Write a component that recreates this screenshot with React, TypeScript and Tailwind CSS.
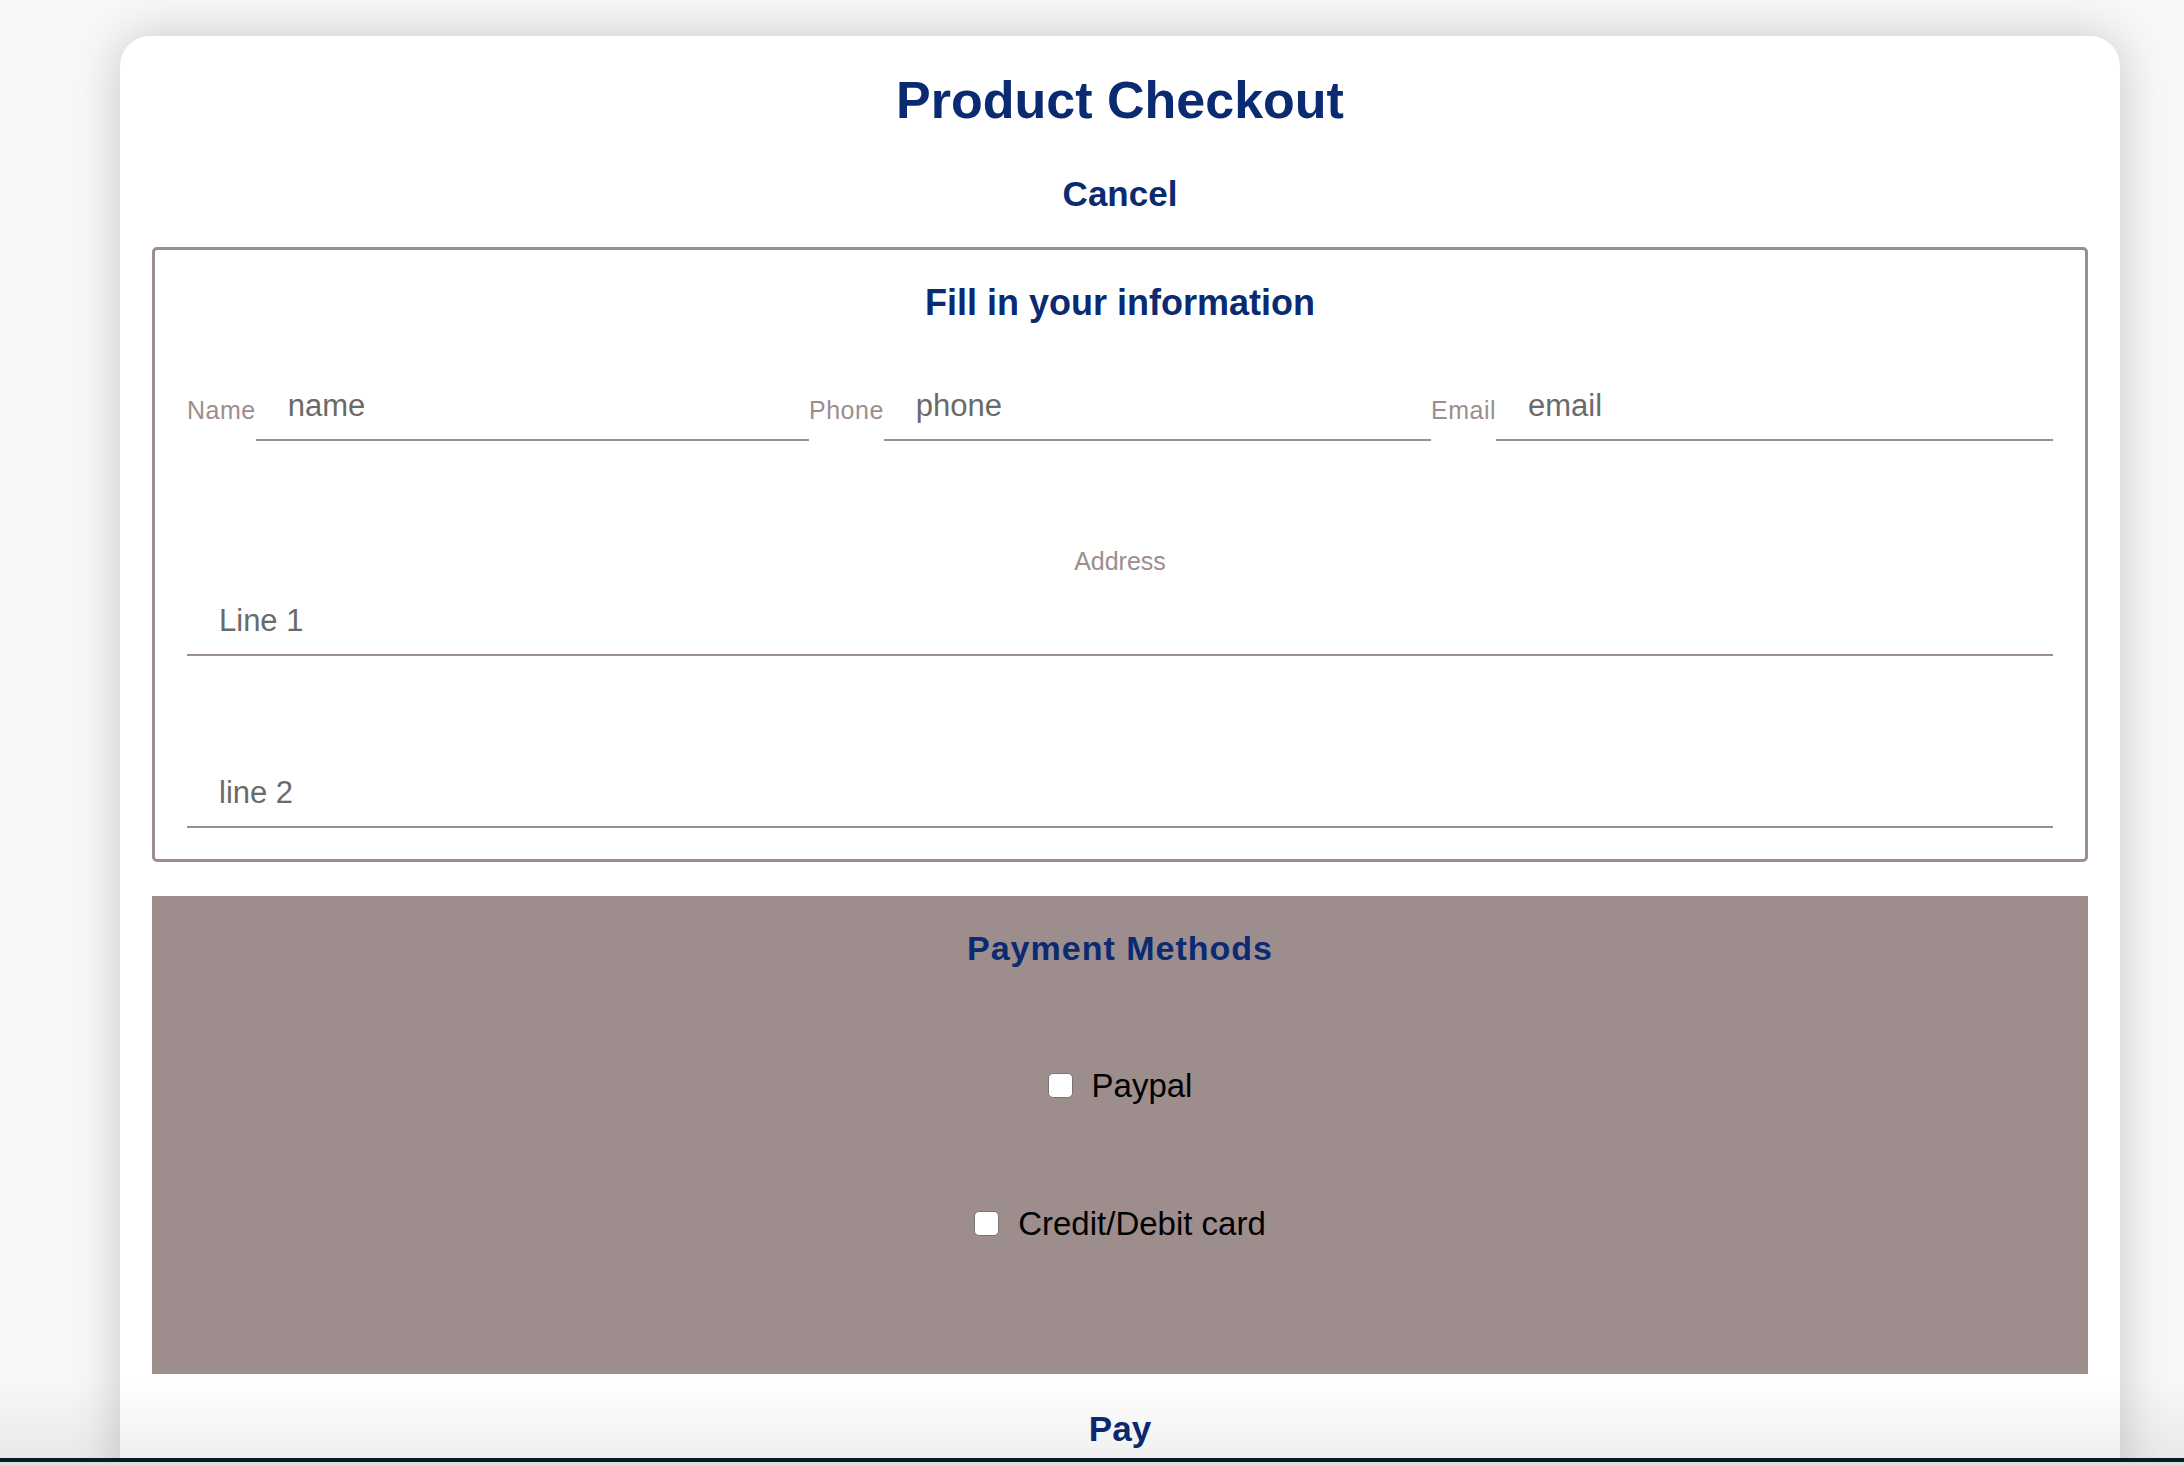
import React, { useState } from 'react';

const font = { fontFamily: '"Liberation Sans", Arial, sans-serif' };

interface FieldProps {
  label?: string;
  placeholder: string;
}

const InlineField: React.FC<FieldProps> = ({ label, placeholder }) => (
  <div className="flex flex-1 items-end">
    <label className="pb-[16px] text-[25px] leading-[29px] tracking-[0.5px] text-[#9d8d8d] whitespace-nowrap">
      {label}
    </label>
    <input
      type="text"
      placeholder={placeholder}
      className="min-w-0 flex-1 border-b-2 border-[#9d8d8d] bg-transparent py-[15px] pl-8 text-[31px] leading-[36px] text-[#6a6a6a] outline-none placeholder:text-[#6a6a6a]"
    />
  </div>
);

const PaymentOption: React.FC<{ label: string; checked: boolean; onToggle: () => void }> = ({
  label,
  checked,
  onToggle,
}) => (
  <label className="flex items-center gap-[19px] cursor-pointer">
    <input
      type="checkbox"
      checked={checked}
      onChange={onToggle}
      className="h-[25px] w-[25px] appearance-none rounded-[5px] border border-[#767676] bg-white checked:bg-[#0a2a72]"
    />
    <span className="text-[33px] leading-[37px] text-black">{label}</span>
  </label>
);

export default function App() {
  const [paypal, setPaypal] = useState(false);
  const [card, setCard] = useState(false);

  return (
    <div className="flex h-[1466px] w-[2184px] flex-col overflow-hidden bg-[#f8f8f8]" style={font}>
      <div className="relative h-[1458px] overflow-hidden pt-9">
        <div className="ml-[120px] w-[2000px] rounded-t-[30px] bg-white px-8 pt-[34px] pb-10 shadow-[0_0_50px_rgba(0,0,0,0.2)]">
          <h1 className="text-center text-[52px] leading-[60px] font-bold text-[#0a2a72]">Product Checkout</h1>
          <div className="mt-[44px] text-center">
            <button className="text-[35px] leading-[40px] font-bold text-[#0a2a72]">Cancel</button>
          </div>

          {/* customer info */}
          <div className="mt-[33px] rounded-[5px] border-[3px] border-[#9d8d8d] px-8 pt-8 pb-[31px]">
            <h3 className="text-center text-[36px] leading-[41px] font-bold text-[#0a2a72]">Fill in your information</h3>
            <div className="mt-[50px] flex">
              <InlineField label="Name" placeholder="name" />
              <InlineField label="Phone" placeholder="phone" />
              <InlineField label="Email" placeholder="email" />
            </div>
            <p className="mt-[106px] text-center text-[25px] leading-[29px] text-[#9d8d8d]">Address</p>
            <input
              type="text"
              placeholder="Line 1"
              className="mt-[12px] block w-full border-b-2 border-[#9d8d8d] py-[15px] pl-8 text-[31px] leading-[36px] text-[#6a6a6a] outline-none placeholder:text-[#6a6a6a]"
            />
            <input
              type="text"
              placeholder="line 2"
              className="mt-[104px] block w-full border-b-2 border-[#9d8d8d] py-[15px] pl-8 text-[31px] leading-[36px] text-[#6a6a6a] outline-none placeholder:text-[#6a6a6a]"
            />
          </div>

          {/* payment */}
          <div className="mt-[34px] flex h-[478px] flex-col items-center bg-[#9d8d8d] pt-[33px]">
            <h3 className="text-[34px] leading-[39px] font-bold tracking-[1px] text-[#0a2a72]">Payment Methods</h3>
            <div className="mt-[99px]">
              <PaymentOption label="Paypal" checked={paypal} onToggle={() => setPaypal(!paypal)} />
            </div>
            <div className="mt-[101px]">
              <PaymentOption label="Credit/Debit card" checked={card} onToggle={() => setCard(!card)} />
            </div>
          </div>

          <div className="mt-[35px] text-center">
            <button className="text-[35px] leading-[40px] font-bold text-[#0a2a72]">Pay</button>
          </div>
        </div>
        <div className="pointer-events-none absolute inset-x-0 bottom-0 h-[80px] bg-gradient-to-b from-transparent to-black/[0.06]" />
      </div>
      <div className="h-1 bg-[#0c1a26]" />
      <div className="h-1 bg-[#dcdfe2]" />
    </div>
  );
}
